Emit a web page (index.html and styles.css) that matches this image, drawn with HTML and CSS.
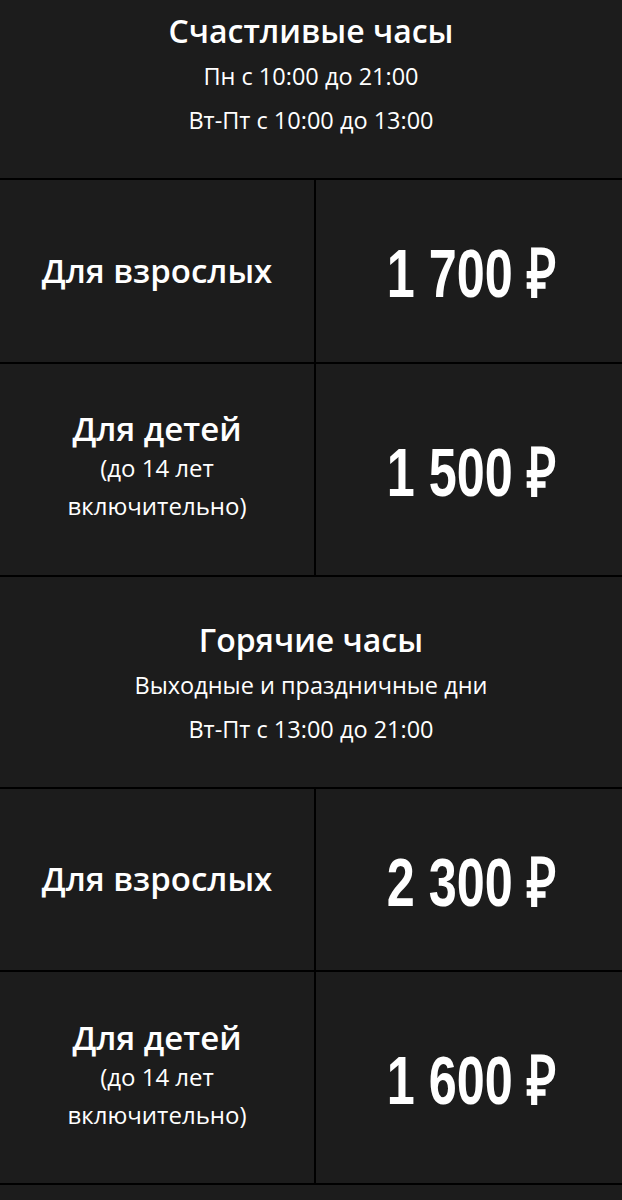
FILE: index.html
```html
<!DOCTYPE html>
<html lang="ru">
<head>
    <meta charset="UTF-8">
    <meta name="viewport" content="width=device-width, initial-scale=1.0">
    <title>Цены</title>
    <link rel="stylesheet" href="styles.css">
</head>
<body>
    <div class="prices">
        <div class="period">
            <h2>Счастливые часы</h2>
            <p>Пн с 10:00 до 21:00</p>
            <p>Вт-Пт с 10:00 до 13:00</p>
        </div>
        <div class="cell who">
            <div class="who-title">Для взрослых</div>
        </div>
        <div class="cell price"><span>1 700 ₽</span></div>
        <div class="cell who kids">
            <div class="who-title">Для детей</div>
            <div class="who-note">(до 14 лет<br>включительно)</div>
        </div>
        <div class="cell price"><span>1 500 ₽</span></div>

        <div class="period">
            <h2>Горячие часы</h2>
            <p>Выходные и праздничные дни</p>
            <p>Вт-Пт с 13:00 до 21:00</p>
        </div>
        <div class="cell who">
            <div class="who-title">Для взрослых</div>
        </div>
        <div class="cell price"><span>2 300 ₽</span></div>
        <div class="cell who kids">
            <div class="who-title">Для детей</div>
            <div class="who-note">(до 14 лет<br>включительно)</div>
        </div>
        <div class="cell price"><span>1 600 ₽</span></div>

        <div class="period tail"></div>
    </div>
</body>
</html>
```

FILE: styles.css
```css
body {
    margin: 0;
    background-color: #1c1c1c;
    color: #ffffff;
    font-family: 'Open Sans', sans-serif;
    overflow: hidden;
}
.prices {
    display: grid;
    grid-template-columns: 314px 1fr;
    gap: 2px;
    background-color: #000;
    margin-top: -32px;
}
.period {
    grid-column: 1 / -1;
    background-color: #1c1c1c;
    text-align: center;
    padding: 40px 16px 36px;
    height: 210px;
    box-sizing: border-box;
}
.period h2 {
    margin: 0;
    font-size: 32px;
    font-weight: 600;
    line-height: 46px;
}
.period p {
    margin: 0;
    font-size: 23.5px;
    line-height: 44px;
}
.cell {
    background-color: #1c1c1c;
    display: flex;
    flex-direction: column;
    align-items: center;
    justify-content: center;
    text-align: center;
    min-height: 181.5px;
    box-sizing: border-box;
}
.kids {
    padding: 45.5px 10px 49.5px;
}
.who-title {
    font-size: 33px;
    font-weight: 600;
    line-height: 40px;
}
.who-note {
    font-size: 24px;
    line-height: 38px;
}
.price {
    font-family: 'Liberation Sans', sans-serif;
    font-weight: 700;
    font-size: 68px;
    padding-left: 6px;
}
.price span {
    display: inline-block;
    transform: scaleX(0.74);
    white-space: nowrap;
}
.tail {
    height: 40px;
    padding: 0;
}
```
